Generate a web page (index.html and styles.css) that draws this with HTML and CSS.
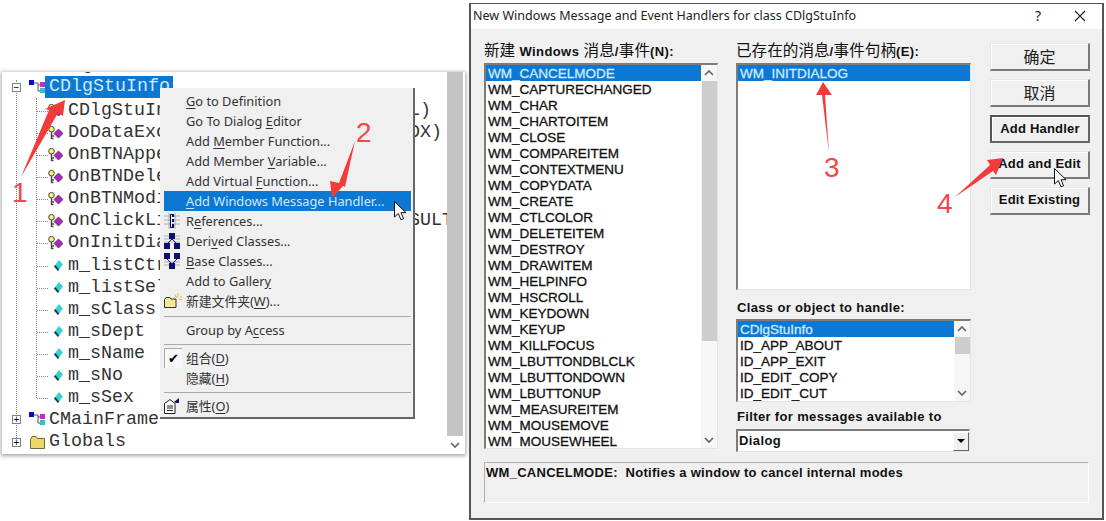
FILE: index.html
```html
<!DOCTYPE html>
<html lang="zh">
<head>
<meta charset="utf-8">
<title>New Windows Message and Event Handlers</title>
<link rel="stylesheet" href="styles.css">
</head>
<body>
<svg class="defs" width="0" height="0" aria-hidden="true">
  <symbol id="i-class" viewBox="0 0 17 14">
    <path d="M3 3H9V5M9 5H11M9 5V11H11" fill="none" stroke="#555" stroke-width="1"/>
    <rect x="0" y="0" width="5" height="5" fill="#0a0acc"/>
    <rect x="11" y="2" width="5" height="5" fill="#d022d0"/>
    <rect x="11" y="8" width="5" height="5" fill="#2ac4c4"/>
  </symbol>
  <symbol id="i-method" viewBox="0 0 15 14">
    <circle cx="3.5" cy="3.2" r="2.8" fill="#f5f07a" stroke="#444" stroke-width="1"/>
    <path d="M3.5 6V13M3.5 10H6M3.5 12.500H5.500" fill="none" stroke="#444" stroke-width="1.4"/>
    <path d="M10.5 3L15 7.5L10.5 12L6 7.5Z" fill="#a828b8" stroke="#4a1060" stroke-width=".7"/>
  </symbol>
  <symbol id="i-member" viewBox="0 0 9 11">
    <path d="M5 0L9 4.500L4 11L0 6.500Z" fill="#35d2d2"/>
    <path d="M0 6.500L4 11L5 9.500L1.500 5Z" fill="#1d3a4a"/>
  </symbol>
  <symbol id="i-folder" viewBox="0 0 15 13">
    <path d="M.5 3.5L2 .5H6L7.5 2.500H14.500V12.500H.5Z" fill="#e9d968" stroke="#6f6a35"/>
  </symbol>
  <symbol id="i-refs" viewBox="0 0 16 16">
    <path d="M0 3H16M0 7H16M0 11H16M5 0V16M11 0V16" stroke="#9a9a9a" stroke-width=".8"/>
    <path d="M6 1H10V4H8V6H10V9H8V11H10V15H6Z" fill="#10105a"/>
    <path d="M7.5 2V14" stroke="#e8e8e8"/>
  </symbol>
  <symbol id="i-derived" viewBox="0 0 16 16">
    <path d="M0 3H16M0 6H16M0 9H16" stroke="#a0a0a0" stroke-width=".8"/>
    <rect x="5" y="0" width="6" height="6" fill="#0e0e70"/>
    <path d="M8 6L3 11M8 6L13 11" stroke="#0e0e70"/>
    <rect x="0" y="10" width="6" height="6" fill="#0e0e70"/>
    <rect x="10" y="10" width="6" height="6" fill="#0e0e70"/>
  </symbol>
  <symbol id="i-base" viewBox="0 0 16 16">
    <path d="M0 9H16M0 12H16" stroke="#a0a0a0" stroke-width=".8"/>
    <rect x="0" y="0" width="6" height="6" fill="#0e0e70"/>
    <rect x="10" y="0" width="6" height="6" fill="#0e0e70"/>
    <path d="M3 6L8 11M13 6L8 11" stroke="#0e0e70"/>
    <rect x="5" y="10" width="6" height="6" fill="#0e0e70"/>
  </symbol>
  <symbol id="i-newfolder" viewBox="0 0 18 16">
    <path d="M.5 6.500L2 4.500H6L7 6H12V14.500H.5Z" fill="#f4ea90" stroke="#333"/>
    <path d="M14 0V4M11 3L13 5M18 3L15.500 5M15 6.500H18M10.500 1.500L12.500 3.500" stroke="#d8c040" fill="none"/>
  </symbol>
  <symbol id="i-props" viewBox="0 0 16 16">
    <path d="M.5 5.500L6 1.500L11 5.500V15.500H.5Z" fill="#fff" stroke="#222"/>
    <path d="M3 8H9M3 10H9M3 12.500H9" stroke="#222"/>
    <path d="M10 4L15 0V5H12Z" fill="#14145a"/>
  </symbol>
  <symbol id="i-cursor" viewBox="0 0 13 20">
    <path d="M.5 .5V16L4.300 12.500L7 18.800L9.600 17.700L7 11.700H12Z" fill="#fff" stroke="#111" stroke-width="1"/>
  </symbol>
  <symbol id="i-up" viewBox="0 0 10 6">
    <path d="M1 5L5 1L9 5" fill="none" stroke="#666" stroke-width="1.700"/>
  </symbol>
  <symbol id="i-down" viewBox="0 0 10 6">
    <path d="M1 1L5 5L9 1" fill="none" stroke="#666" stroke-width="1.700"/>
  </symbol>
</svg>

<section class="classview">
  <ul class="tree">
    <li class="row clipped-row"><span class="clip-text">g</span></li>
    <li class="row lvl0 branch"><span class="exp">&minus;</span><svg class="ico-class"><use href="#i-class"/></svg><span class="node selected">CDlgStuInfo</span></li>
    <li class="row lvl1"><svg class="ico-method"><use href="#i-method"/></svg><span class="node">CDlgStuInfo(CWnd* pParent = NULL)</span></li>
    <li class="row lvl1"><svg class="ico-method"><use href="#i-method"/></svg><span class="node">DoDataExchange(CDataExchange* pDX)</span></li>
    <li class="row lvl1"><svg class="ico-method"><use href="#i-method"/></svg><span class="node">OnBTNAppend()</span></li>
    <li class="row lvl1"><svg class="ico-method"><use href="#i-method"/></svg><span class="node">OnBTNDelete()</span></li>
    <li class="row lvl1"><svg class="ico-method"><use href="#i-method"/></svg><span class="node">OnBTNModify()</span></li>
    <li class="row lvl1"><svg class="ico-method"><use href="#i-method"/></svg><span class="node">OnClickList1(NMHDR* pNMHDR, LRESULT* pResult)</span></li>
    <li class="row lvl1"><svg class="ico-method"><use href="#i-method"/></svg><span class="node">OnInitDialog()</span></li>
    <li class="row lvl1 member"><svg class="ico-member"><use href="#i-member"/></svg><span class="node">m_listCtrl</span></li>
    <li class="row lvl1 member"><svg class="ico-member"><use href="#i-member"/></svg><span class="node">m_listSel</span></li>
    <li class="row lvl1 member"><svg class="ico-member"><use href="#i-member"/></svg><span class="node">m_sClass</span></li>
    <li class="row lvl1 member"><svg class="ico-member"><use href="#i-member"/></svg><span class="node">m_sDept</span></li>
    <li class="row lvl1 member"><svg class="ico-member"><use href="#i-member"/></svg><span class="node">m_sName</span></li>
    <li class="row lvl1 member"><svg class="ico-member"><use href="#i-member"/></svg><span class="node">m_sNo</span></li>
    <li class="row lvl1 member"><svg class="ico-member"><use href="#i-member"/></svg><span class="node">m_sSex</span></li>
    <li class="row lvl0"><span class="exp">+</span><svg class="ico-class"><use href="#i-class"/></svg><span class="node">CMainFrame</span></li>
    <li class="row lvl0"><span class="exp">+</span><svg class="ico-folder"><use href="#i-folder"/></svg><span class="node">Globals</span></li>
  </ul>
  <div class="tree-scroll">
    <div class="tree-thumb"></div>
    <svg class="chev"><use href="#i-down"/></svg>
  </div>

  <div class="menu">
    <div class="mi"><span class="mi-ico"></span><span><u>G</u>o to Definition</span></div>
    <div class="mi"><span class="mi-ico"></span><span>Go To Dialog <u>E</u>ditor</span></div>
    <div class="mi"><span class="mi-ico"></span><span>Add <u>M</u>ember Function...</span></div>
    <div class="mi"><span class="mi-ico"></span><span>Add Member <u>V</u>ariable...</span></div>
    <div class="mi"><span class="mi-ico"></span><span>Add Virtual <u>F</u>unction...</span></div>
    <div class="mi active"><span class="mi-ico"></span><span><u>A</u>dd Windows Message Handler...</span></div>
    <div class="mi"><span class="mi-ico"><svg class="mico"><use href="#i-refs"/></svg></span><span>R<u>e</u>ferences...</span></div>
    <div class="mi"><span class="mi-ico"><svg class="mico"><use href="#i-derived"/></svg></span><span>Deri<u>v</u>ed Classes...</span></div>
    <div class="mi"><span class="mi-ico"><svg class="mico"><use href="#i-base"/></svg></span><span><u>B</u>ase Classes...</span></div>
    <div class="mi"><span class="mi-ico"></span><span>Add to Galler<u>y</u></span></div>
    <div class="mi"><span class="mi-ico"><svg class="mico wide"><use href="#i-newfolder"/></svg></span><span>新建文件夹(<u>W</u>)...</span></div>
    <div class="sep sep-first"></div>
    <div class="mi"><span class="mi-ico"></span><span>Group by A<u>c</u>cess</span></div>
    <div class="sep"></div>
    <div class="mi"><span class="mi-ico checked">&#10004;</span><span>组合(<u>D</u>)</span></div>
    <div class="mi"><span class="mi-ico"></span><span>隐藏(<u>H</u>)</span></div>
    <div class="sep"></div>
    <div class="mi"><span class="mi-ico"><svg class="mico"><use href="#i-props"/></svg></span><span>属性(<u>O</u>)</span></div>
  </div>
</section>

<section class="dialog">
  <header class="titlebar">
    <span class="title">New Windows Message and Event Handlers for class CDlgStuInfo</span>
    <span class="help">?</span>
    <svg class="close" viewBox="0 0 12 12"><path d="M1 1L11 11M11 1L1 11" stroke="#222" stroke-width="1.100"/></svg>
  </header>
  <div class="dlg-body">
    <div class="columns">
      <div class="col col-msgs">
        <label class="lbl cjk">新建 <b>Windows</b> 消息<b>/</b>事件<b>(N):</b></label>
        <div class="listbox grow">
          <ul class="items">
            <li class="sel">WM_CANCELMODE</li>
            <li>WM_CAPTURECHANGED</li>
            <li>WM_CHAR</li>
            <li>WM_CHARTOITEM</li>
            <li>WM_CLOSE</li>
            <li>WM_COMPAREITEM</li>
            <li>WM_CONTEXTMENU</li>
            <li>WM_COPYDATA</li>
            <li>WM_CREATE</li>
            <li>WM_CTLCOLOR</li>
            <li>WM_DELETEITEM</li>
            <li>WM_DESTROY</li>
            <li>WM_DRAWITEM</li>
            <li>WM_HELPINFO</li>
            <li>WM_HSCROLL</li>
            <li>WM_KEYDOWN</li>
            <li>WM_KEYUP</li>
            <li>WM_KILLFOCUS</li>
            <li>WM_LBUTTONDBLCLK</li>
            <li>WM_LBUTTONDOWN</li>
            <li>WM_LBUTTONUP</li>
            <li>WM_MEASUREITEM</li>
            <li>WM_MOUSEMOVE</li>
            <li>WM_MOUSEWHEEL</li>
          </ul>
          <div class="vscroll">
            <svg class="chev"><use href="#i-up"/></svg>
            <div class="thumb thumb-long"></div>
            <div class="track"></div>
            <svg class="chev"><use href="#i-down"/></svg>
          </div>
        </div>
      </div>
      <div class="col col-mid">
        <label class="lbl cjk">已存在的消息<b>/</b>事件句柄<b>(E):</b></label>
        <div class="listbox existing">
          <ul class="items"><li class="sel">WM_INITDIALOG</li></ul>
        </div>
        <label class="lbl lbl-class">Class or object to handle:</label>
        <div class="listbox classes">
          <ul class="items">
            <li class="sel">CDlgStuInfo</li>
            <li>ID_APP_ABOUT</li>
            <li>ID_APP_EXIT</li>
            <li>ID_EDIT_COPY</li>
            <li>ID_EDIT_CUT</li>
          </ul>
          <div class="vscroll">
            <svg class="chev"><use href="#i-up"/></svg>
            <div class="thumb thumb-short"></div>
            <div class="track"></div>
            <svg class="chev"><use href="#i-down"/></svg>
          </div>
        </div>
        <label class="lbl lbl-filter">Filter for messages available to</label>
        <div class="combo"><span class="combo-val">Dialog</span><span class="combo-btn"><i class="tri"></i></span></div>
      </div>
      <div class="col col-btns">
        <button class="btn cjk-btn">确定</button>
        <button class="btn cjk-btn">取消</button>
        <button class="btn default">Add Handler</button>
        <button class="btn">Add and Edit</button>
        <button class="btn">Edit Existing</button>
      </div>
    </div>
    <div class="status">WM_CANCELMODE:  Notifies a window to cancel internal modes</div>
  </div>
</section>

<svg class="annot" width="1106" height="521" viewBox="0 0 1106 521">
  <polygon class="arrow" points="21,177 49,110 45,109 65,100 63,116 58,113"/>
  <polygon class="arrow" points="355,141 345,187 343,186 332,198 330,181 339,183"/>
  <polygon class="arrow" points="829,153 825,95 832,95 823,82 816,95 822,95"/>
  <polygon class="arrow" points="955,197 993,171 996,175 1003,158 987,160 990,165"/>
  <text class="num" x="12" y="202">1</text>
  <text class="num" x="356" y="142">2</text>
  <text class="num" x="824" y="177">3</text>
  <text class="num" x="937" y="213">4</text>
  <use href="#i-cursor" x="394" y="201" width="13" height="20"/>
  <use href="#i-cursor" x="1054" y="168" width="13" height="20"/>
</svg>
</body>
</html>
```

FILE: styles.css
```css
* { box-sizing: border-box; }

html, body {
  margin: 0;
  padding: 0;
}

body {
  position: relative;
  width: 1106px;
  height: 521px;
  overflow: hidden;
  background: #fff;
}

.defs { position: absolute; }

ul { list-style: none; margin: 0; padding: 0; }

/* ---------- class view window ---------- */
.classview {
  position: absolute;
  left: 2px;
  top: 72px;
  width: 463px;
  height: 382px;
  display: flex;
  background: #fff;
  box-shadow: 0 1px 4px 1px rgba(0, 0, 0, .35);
}

.tree {
  position: relative;
  flex: 0 0 445px;
  overflow: hidden;
  padding-top: 4px;
  font: 18.33px/22px "Liberation Mono", monospace;
  color: #333;
}

.tree::before {
  content: "";
  position: absolute;
  left: 14px;
  top: 8px;
  height: 360px;
  border-left: 1px dotted #888;
}

.tree::after {
  content: "";
  position: absolute;
  left: 34px;
  top: 26px;
  height: 300px;
  border-left: 1px dotted #888;
}

.row {
  position: relative;
  display: flex;
  align-items: center;
  height: 22.07px;
  white-space: pre;
}

.branch { margin-bottom: 2px; }

.clipped-row {
  height: 22px;
  margin-top: -22px;
  padding-left: 80px;
}

.lvl0 { padding-left: 10px; }
.lvl1 { padding-left: 46px; }

.lvl1::before {
  content: "";
  position: absolute;
  left: 35px;
  top: 50%;
  width: 11px;
  border-top: 1px dotted #888;
}

.exp {
  position: relative;
  z-index: 1;
  flex: none;
  width: 9px;
  height: 9px;
  margin-right: 8px;
  border: 1px solid #808080;
  background: #fff;
  font: 10px/7px "Liberation Sans", sans-serif;
  color: #000;
  text-align: center;
}

.ico-class { flex: none; width: 17px; height: 14px; margin: -1px -1px 0 0; }
.ico-folder { flex: none; width: 15px; height: 13px; margin: 0 0 0 1px; }
.ico-method { flex: none; width: 15px; height: 14px; margin-right: 5px; }
.ico-member { flex: none; width: 9px; height: 11px; margin: 0 5px 0 6px; }

.node { padding: 0 3px 0 0; }
.lvl0 .node { padding-left: 4px; }

.selected {
  background: #0c78d4;
  color: #cfe9fb;
  height: 22px;
}

.tree-scroll {
  flex: 0 0 16px;
  display: flex;
  flex-direction: column;
  align-items: center;
  padding-bottom: 4px;
}

.tree-thumb {
  flex: 1;
  align-self: stretch;
  background: #c4c4c4;
}

.chev { flex: none; width: 10px; height: 6px; margin: 5px 0; }
.tree-scroll .chev { margin: 6px 0 2px; }

/* ---------- context menu ---------- */
.menu {
  position: absolute;
  left: 158px;
  top: 16px;
  width: 255px;
  height: 331px;
  padding: 3px 2px 3px 4px;
  background: #f0f0f0;
  border-right: 2px solid #666;
  border-bottom: 2px solid #666;
  font: 12.8px/20px "Noto Sans", "Noto Sans CJK SC", sans-serif;
  color: #333;
}

.mi {
  display: flex;
  align-items: center;
  height: 20px;
}

.mi u { text-underline-offset: 2px; }

.mi-ico {
  flex: none;
  width: 22px;
  height: 20px;
  display: flex;
  align-items: center;
}

.mico { width: 16px; height: 16px; }
.mico.wide { width: 18px; }

.checked {
  width: 18px;
  margin-right: 4px;
  justify-content: center;
  background: #f8f8f8;
  border-top: 1px solid #aaa;
  border-left: 1px solid #aaa;
  font: 13px/1 "DejaVu Sans", sans-serif;
  color: #000;
}

.active {
  background: #0c78d4;
  color: #cfe9fb;
}

.sep {
  height: 1px;
  margin: 4px 0 3px;
  background: #a8a8a8;
}

.sep-first { margin-top: 5px; }

/* ---------- dialog ---------- */
.dialog {
  position: absolute;
  left: 469px;
  top: 3px;
  width: 635px;
  height: 517px;
  display: flex;
  flex-direction: column;
  background: #f0f0f0;
  border: 1px solid #555;
  border-width: 1px 2px 2px 2px;
  font-family: "Liberation Sans", "Noto Sans CJK SC", sans-serif;
  color: #111;
}

.titlebar {
  flex: none;
  height: 25px;
  display: flex;
  align-items: center;
  padding: 0 0 2px 2px;
  background: #fff;
  font: 12.500px "Noto Sans", sans-serif;
  letter-spacing: .02px;
  color: #222;
}

.title { flex: 1; }

.help {
  margin-right: 33px;
  font-size: 14px;
}

.close {
  width: 12px;
  height: 12px;
  margin-right: 16px;
}

.dlg-body {
  flex: 1;
  display: flex;
  flex-direction: column;
  padding: 14px 12px 15px 13px;
  min-height: 0;
}

.columns {
  flex: 1;
  display: flex;
  min-height: 0;
}

.col {
  flex: none;
  display: flex;
  flex-direction: column;
}

.col-msgs { width: 234px; margin-right: 18px; }
.col-mid { width: 235px; margin-right: 19px; }
.col-btns {
  width: 100px;
  gap: 8px;
}

.lbl {
  flex: none;
  height: 16px;
  margin-bottom: 4px;
  padding-left: 1px;
  font-size: 13px;
  line-height: 16px;
  font-weight: bold;
  letter-spacing: .35px;
  white-space: nowrap;
}

.lbl.cjk {
  padding-left: 0;
  font-weight: normal;
  font-size: 15.6px;
  letter-spacing: 0;
}

.lbl.cjk b { font-size: 13px; letter-spacing: .4px; }

.lbl-class { margin-top: 10px; margin-bottom: 3px; }
.lbl-filter { margin-top: 7px; margin-bottom: 4px; }

.listbox {
  display: flex;
  background: #fff;
  border-top: 2px solid #7c7c7c;
  border-left: 2px solid #7c7c7c;
  border-right: 1px solid #e4e4e4;
  border-bottom: 1px solid #e4e4e4;
  overflow: hidden;
}

.grow { flex: 1; min-height: 0; }
.existing { height: 227px; flex: none; }
.classes { height: 83px; flex: none; }

.items {
  flex: 1;
  font-size: 13.5px;
  line-height: 18px;
  -webkit-text-stroke: .3px #111;
  white-space: nowrap;
}

.items li { height: 16px; padding-left: 2px; }

.items .sel {
  background: #0c78d4;
  color: #cfe9fb;
  -webkit-text-stroke: .3px #cfe9fb;
}

.vscroll {
  flex: 0 0 16px;
  display: flex;
  flex-direction: column;
  align-items: center;
  background: #f6f6f6;
}

.thumb { flex: none; align-self: stretch; margin-left: 1px; background: #cdcdcd; }
.thumb-long { height: 260px; }
.thumb-short { height: 17px; }
.track { flex: 1; }

.combo {
  flex: none;
  height: 23px;
  width: 234px;
  display: flex;
  align-items: center;
  background: #fff;
  border-top: 2px solid #7c7c7c;
  border-left: 2px solid #7c7c7c;
  border-right: 1px solid #e4e4e4;
  border-bottom: 1px solid #e4e4e4;
}

.combo-val {
  flex: 1;
  padding: 0 0 2px 1px;
  font-size: 13px;
  font-weight: bold;
  letter-spacing: .4px;
}

.combo-btn {
  flex: none;
  width: 16px;
  height: 19px;
  display: flex;
  align-items: center;
  justify-content: center;
  background: #f0f0f0;
  border-right: 1px solid #666;
  border-bottom: 1px solid #666;
  border-top: 1px solid #fff;
  border-left: 1px solid #fff;
}

.tri {
  width: 0;
  height: 0;
  border: 4px solid transparent;
  border-top-color: #000;
  border-bottom-width: 0;
}

.btn {
  flex: none;
  height: 28px;
  width: 100px;
  padding: 0 0 2px;
  background: #f0f0f0;
  border: 1px solid #e6e6e6;
  border-right: 2px solid #7a7a7a;
  border-bottom: 2px solid #7a7a7a;
  box-shadow: inset 1px 1px 0 #fff;
  font: bold 13px "Liberation Sans", sans-serif;
  letter-spacing: .2px;
  color: #111;
}

.cjk-btn {
  padding-bottom: 5px;
  font: 16px "Noto Sans CJK SC", sans-serif;
  letter-spacing: 0;
  color: #222;
}

.default {
  border: 2px solid #666;
  border-top-color: #555;
  border-left-color: #555;
}

.status {
  flex: none;
  height: 41px;
  margin: 13px 1px 0 0;
  padding: 2px 0 0 1px;
  border-top: 1px solid #b0b0b0;
  border-left: 1px solid #b0b0b0;
  border-right: 1px solid #fff;
  border-bottom: 1px solid #fff;
  font-size: 13px;
  line-height: 16px;
  font-weight: bold;
  letter-spacing: .28px;
  white-space: pre;
}

/* ---------- annotations ---------- */
.annot {
  position: absolute;
  left: 0;
  top: 0;
  pointer-events: none;
}

.arrow { fill: #f23c3c; }

.num {
  font: 28px "Liberation Sans", sans-serif;
  fill: #ef4a4a;
}
```
